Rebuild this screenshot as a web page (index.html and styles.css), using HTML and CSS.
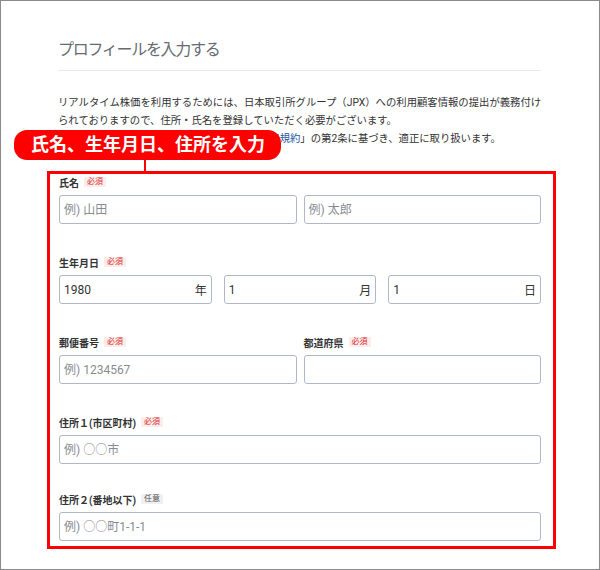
FILE: index.html
```html
<!DOCTYPE html>
<html lang="ja">
<head>
<meta charset="utf-8">
<title>プロフィールを入力する</title>
<link rel="stylesheet" href="styles.css">
</head>
<body>
<div class="page">
  <header class="head">
    <h1 class="title">プロフィールを入力する</h1>
  </header>
  <p class="lead">リアルタイム株価を利用するためには、日本取引所グループ（JPX）への利用顧客情報の提出が義務付け<br>られておりますので、住所・氏名を登録していただく必要がございます。<br>ご登録いただいた情報は、「<a class="link" href="#">株探プレミアム利用規約</a>」の第2条に基づき、適正に取り扱います。</p>

  <div class="callout">氏名、生年月日、住所を入力<span class="connector"></span></div>

  <form class="form-box">
    <div class="group">
      <div class="label">氏名<span class="badge req">必須</span></div>
      <div class="row two">
        <input class="field" type="text" placeholder="例) 山田">
        <input class="field" type="text" placeholder="例) 太郎">
      </div>
    </div>

    <div class="group">
      <div class="label">生年月日<span class="badge req">必須</span></div>
      <div class="row three">
        <div class="date-field"><input class="date-input" type="text" value="1980"><span class="suffix">年</span></div>
        <div class="date-field"><input class="date-input" type="text" value="1"><span class="suffix">月</span></div>
        <div class="date-field"><input class="date-input" type="text" value="1"><span class="suffix">日</span></div>
      </div>
    </div>

    <div class="group">
      <div class="row two">
        <div class="col">
          <div class="label">郵便番号<span class="badge req">必須</span></div>
          <input class="field" type="text" placeholder="例) 1234567">
        </div>
        <div class="col">
          <div class="label">都道府県<span class="badge req">必須</span></div>
          <input class="field" type="text">
        </div>
      </div>
    </div>

    <div class="group addr1">
      <div class="label">住所１(市区町村)<span class="badge req">必須</span></div>
      <input class="field" type="text" placeholder="例) ○○市">
    </div>

    <div class="group last">
      <div class="label">住所２(番地以下)<span class="badge opt">任意</span></div>
      <input class="field" type="text" placeholder="例) ○○町1-1-1">
    </div>
  </form>
</div>
</body>
</html>
```

FILE: styles.css
```css
* { box-sizing: border-box; }

html, body {
  margin: 0;
  padding: 0;
  background: #fff;
}

body {
  font-family: Roboto, "Noto Sans CJK JP", sans-serif;
  color: #333;
}

.page {
  position: relative;
  width: 600px;
  height: 570px;
  border: 1px solid #8a8a8a;
  padding: 0 58px 0 57px;
  overflow: hidden;
}

.head {
  margin-top: 39px;
  padding-bottom: 10px;
  border-bottom: 1px solid #e9e9e9;
}

.title {
  margin: 0;
  font-size: 16px;
  line-height: 20px;
  letter-spacing: -1.3px;
  font-weight: 400;
  color: #666b73;
}

.lead {
  margin: 23px 0 0;
  font-size: 10.35px;
  line-height: 18px;
  color: #333;
  white-space: nowrap;
}

.link {
  color: #1f56a8;
  text-decoration: none;
}

.callout {
  position: absolute;
  left: 13px;
  top: 129px;
  width: 267px;
  height: 30px;
  border-radius: 13px;
  background: #ff0000;
  color: #fff;
  font-weight: 700;
  font-size: 18px;
  line-height: 30px;
  padding-left: 17px;
  white-space: nowrap;
}

.connector {
  position: absolute;
  left: 130px;
  top: 100%;
  width: 2px;
  height: 13px;
  background: #ff0000;
}

.form-box {
  margin: 23px -15px 0 -11px;
  border: 3px solid #ff0000;
  padding: 1px 12px 5px 9px;
}

.group {
  margin-bottom: 31px;
}

.group.addr1 {
  margin-bottom: 28px;
}

.group.last {
  margin-bottom: 0;
}

.label {
  display: flex;
  align-items: center;
  gap: 5px;
  height: 14px;
  margin-bottom: 6px;
  font-size: 10px;
  font-weight: 700;
  color: #333;
  white-space: nowrap;
}

.badge {
  font-size: 8px;
  line-height: 10px;
  font-weight: 400;
  padding: 0 3px;
}

.badge.req {
  color: #d92b2b;
  background: #fdecec;
}

.badge.opt {
  color: #555;
  background: #f0f0f0;
}

.row {
  display: grid;
}

.row.two {
  grid-template-columns: minmax(0, 1fr) minmax(0, 1fr);
  column-gap: 7px;
}

.row.three {
  grid-template-columns: minmax(0, 1fr) minmax(0, 1fr) minmax(0, 1fr);
  column-gap: 12px;
}

.col {
  display: flex;
  flex-direction: column;
  min-width: 0;
}

.field {
  display: block;
  width: 100%;
  min-width: 0;
  height: 29px;
  margin: 0;
  border: 1px solid #aeb8c9;
  border-radius: 3px;
  padding: 0 4px;
  font-family: Roboto, "Noto Sans CJK JP", sans-serif;
  font-size: 12px;
  color: #333;
  background: #fff;
  outline: none;
}

.field::placeholder {
  color: #878c94;
}

.date-field {
  display: flex;
  align-items: center;
  min-width: 0;
  height: 29px;
  border: 1px solid #aeb8c9;
  border-radius: 3px;
  padding: 0 4px;
  background: #fff;
}

.date-input {
  flex: 1 1 0;
  width: 0;
  min-width: 0;
  border: none;
  padding: 0;
  margin: 0;
  height: 100%;
  font-family: Roboto, "Noto Sans CJK JP", sans-serif;
  font-size: 12px;
  color: #333;
  outline: none;
  background: transparent;
}

.suffix {
  font-size: 12px;
  color: #333;
}
```
